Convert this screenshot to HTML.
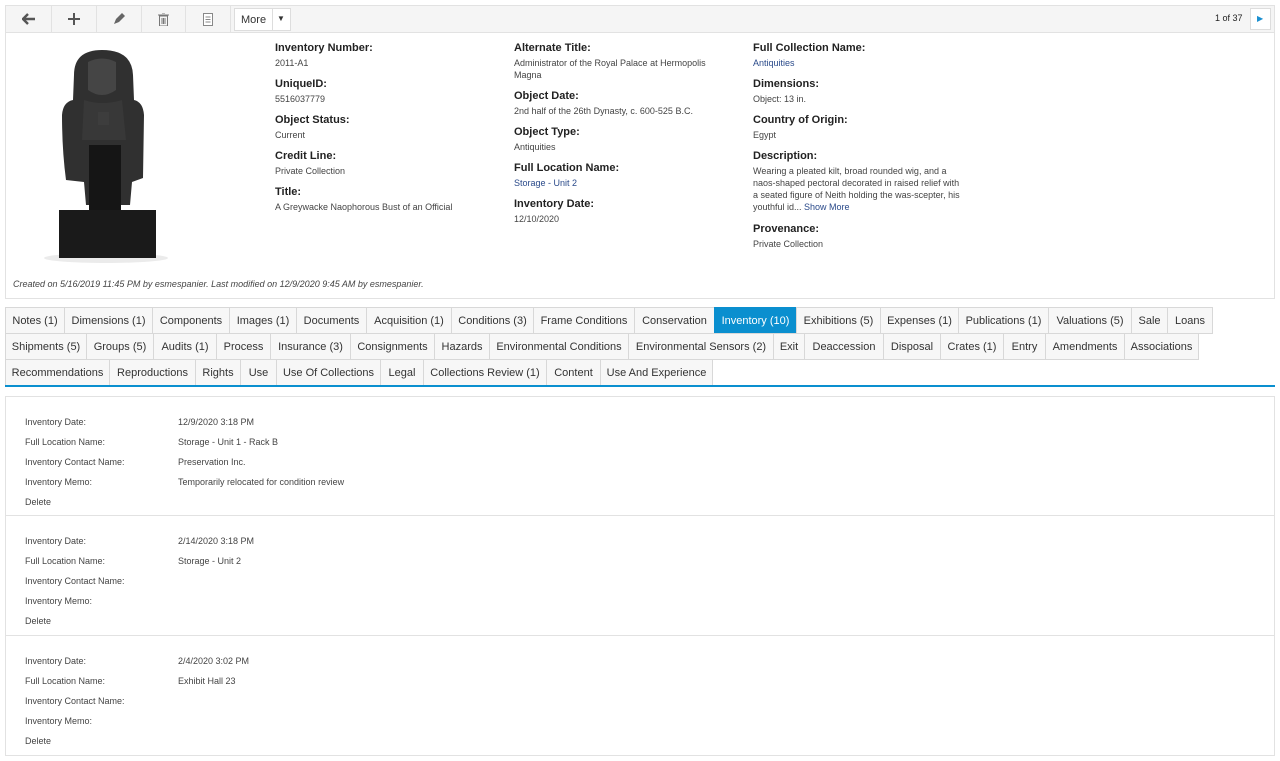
<!DOCTYPE html>
<html><head><meta charset="utf-8"><style>
*{box-sizing:border-box;margin:0;padding:0}
body{width:1280px;height:761px;background:#fff;font-family:"Liberation Sans",sans-serif;color:#333;position:relative;overflow:hidden}
.a{position:absolute;white-space:nowrap}
.tb{position:absolute;left:5px;top:5px;width:1270px;height:28px;background:#f5f5f5;border:1px solid #e2e2e2}
.btn{position:absolute;top:0;height:26px;border-right:1px solid #e2e2e2;display:flex;align-items:center;justify-content:center}
.panel{position:absolute;left:5px;top:32px;width:1270px;height:267px;border:1px solid #e2e2e2;border-top:none}
.l{font-size:11px;font-weight:bold;color:#222;line-height:14px}
.v{font-size:9px;color:#444;line-height:12px}
.lk{color:#2a4a8a}
.row{position:absolute;left:5px;display:flex;height:27px}
.t{height:27px;border:1px solid #d8d8d8;border-right:none;background:#f7f7f7;font-size:11px;color:#333;display:flex;align-items:center;justify-content:center;white-space:nowrap}
.row .t:last-child{border-right:1px solid #d8d8d8}
.t.on{background:#0a8fcf;color:#fff;border-color:#0a8fcf}
.inv{position:absolute;left:5px;width:1270px;border:1px solid #e2e2e2;border-top:none;height:120px}
.il{position:absolute;left:19px;font-size:9px;color:#444}
.iv{position:absolute;left:172px;font-size:9px;color:#444}
</style></head><body>
<div class="tb">
<div class="btn" style="left:0;width:46px"><svg width="14" height="12" viewBox="0 0 14 12"><path d="M6 1L1 6l5 5M1 6h12" stroke="#555" stroke-width="2.4" fill="none"/></svg></div>
<div class="btn" style="left:46px;width:45px"><svg width="12" height="12"><path d="M6 0v12M0 6h12" stroke="#555" stroke-width="2"/></svg></div>
<div class="btn" style="left:91px;width:45px"><svg width="12" height="12"><path d="M1 11l2-5 6-6 3 3-6 6z" fill="#666"/></svg></div>
<div class="btn" style="left:136px;width:44px"><svg width="11" height="13"><path d="M0 2h11M4 0h3M1.5 3h8v10h-8z" stroke="#777" fill="none" stroke-width="1"/><path d="M4 5v6M5.5 5v6M7 5v6" stroke="#777"/></svg></div>
<div class="btn" style="left:180px;width:45px"><svg width="10" height="13"><rect x=".5" y=".5" width="9" height="12" fill="#fff" stroke="#888"/><path d="M2.5 4h5M2.5 6.5h5M2.5 9h5" stroke="#888"/></svg></div>
<div style="position:absolute;left:228px;top:2px;width:57px;height:23px;border:1px solid #ddd;background:#fff;font-size:11px"><span class="a" style="left:6px;top:5px">More</span><span class="a" style="left:37px;top:0;height:21px;border-left:1px solid #ddd;width:1px"></span><span class="a" style="left:42px;top:5px;font-size:8px">▼</span></div>
<span class="a" style="left:1209px;top:7px;font-size:9px;color:#222">1 of 37</span>
<div style="position:absolute;left:1244px;top:2px;width:21px;height:22px;border:1px solid #ddd;background:#fff"><span class="a" style="left:6px;top:5px;font-size:8px;color:#1a8fd0">▶</span></div>
</div>
<div class="panel">
<svg class="a" style="left:28px;top:10px" width="140" height="230" viewBox="28 42 140 230">
<ellipse cx="100" cy="258" rx="62" ry="5" fill="#ddd" opacity=".6"/>
<path d="M68 75 Q68 50 96 50 Q126 50 127 75 L128 100 Q137 102 138 115 L137 178 L126 182 L124 205 L80 205 L78 182 L60 180 Q56 150 56 115 Q57 102 67 100 Z" fill="#303030"/>
<path d="M82 62 Q96 55 110 62 L110 90 Q96 100 82 90 Z" fill="#454545"/>
<path d="M78 100 Q96 106 116 100 L120 140 L76 140 Z" fill="#383838"/>
<rect x="92" y="112" width="11" height="13" fill="#3d3d3d"/>
<rect x="83" y="145" width="32" height="68" fill="#151515"/>
<rect x="53" y="210" width="97" height="48" fill="#1a1a1a"/>
</svg>
<div class="a l" style="left:269px;top:9px">Inventory Number:</div><div class="a v" style="left:269px;top:25px">2011-A1</div>
<div class="a l" style="left:269px;top:45px">UniqueID:</div><div class="a v" style="left:269px;top:61px">5516037779</div>
<div class="a l" style="left:269px;top:81px">Object Status:</div><div class="a v" style="left:269px;top:97px">Current</div>
<div class="a l" style="left:269px;top:117px">Credit Line:</div><div class="a v" style="left:269px;top:133px">Private Collection</div>
<div class="a l" style="left:269px;top:153px">Title:</div><div class="a v" style="left:269px;top:169px">A Greywacke Naophorous Bust of an Official</div>
<div class="a l" style="left:508px;top:9px">Alternate Title:</div><div class="a v" style="left:508px;top:25px;white-space:normal;width:215px">Administrator of the Royal Palace at Hermopolis Magna</div>
<div class="a l" style="left:508px;top:57px">Object Date:</div><div class="a v" style="left:508px;top:73px">2nd half of the 26th Dynasty, c. 600-525 B.C.</div>
<div class="a l" style="left:508px;top:93px">Object Type:</div><div class="a v" style="left:508px;top:109px">Antiquities</div>
<div class="a l" style="left:508px;top:129px">Full Location Name:</div><div class="a v lk" style="left:508px;top:145px">Storage - Unit 2</div>
<div class="a l" style="left:508px;top:165px">Inventory Date:</div><div class="a v" style="left:508px;top:181px">12/10/2020</div>
<div class="a l" style="left:747px;top:9px">Full Collection Name:</div><div class="a v lk" style="left:747px;top:25px">Antiquities</div>
<div class="a l" style="left:747px;top:45px">Dimensions:</div><div class="a v" style="left:747px;top:61px">Object: 13 in.</div>
<div class="a l" style="left:747px;top:81px">Country of Origin:</div><div class="a v" style="left:747px;top:97px">Egypt</div>
<div class="a l" style="left:747px;top:117px">Description:</div><div class="a v" style="left:747px;top:133px;width:220px">Wearing a pleated kilt, broad rounded wig, and a<br>naos-shaped pectoral decorated in raised relief with<br>a seated figure of Neith holding the was-scepter, his<br>youthful id... <span class="lk">Show More</span></div>
<div class="a l" style="left:747px;top:190px">Provenance:</div><div class="a v" style="left:747px;top:206px">Private Collection</div>
<div class="a" style="left:7px;top:247px;font-size:9px;font-style:italic;color:#444">Created on 5/16/2019 11:45 PM by esmespanier. Last modified on 12/9/2020 9:45 AM by esmespanier.</div>
</div>

<div class="row" style="top:307px">
<div class="t" style="width:59px">Notes (1)</div><div class="t" style="width:88px">Dimensions (1)</div><div class="t" style="width:77px">Components</div><div class="t" style="width:67px">Images (1)</div><div class="t" style="width:70px">Documents</div><div class="t" style="width:85px">Acquisition (1)</div><div class="t" style="width:82px">Conditions (3)</div><div class="t" style="width:101px">Frame Conditions</div><div class="t" style="width:80px">Conservation</div><div class="t on" style="width:82px">Inventory (10)</div><div class="t" style="width:84px">Exhibitions (5)</div><div class="t" style="width:78px">Expenses (1)</div><div class="t" style="width:90px">Publications (1)</div><div class="t" style="width:83px">Valuations (5)</div><div class="t" style="width:36px">Sale</div><div class="t" style="width:46px">Loans</div>
</div>
<div class="row" style="top:333px">
<div class="t" style="width:81px">Shipments (5)</div><div class="t" style="width:67px">Groups (5)</div><div class="t" style="width:63px">Audits (1)</div><div class="t" style="width:54px">Process</div><div class="t" style="width:80px">Insurance (3)</div><div class="t" style="width:84px">Consignments</div><div class="t" style="width:55px">Hazards</div><div class="t" style="width:139px">Environmental Conditions</div><div class="t" style="width:145px">Environmental Sensors (2)</div><div class="t" style="width:31px">Exit</div><div class="t" style="width:79px">Deaccession</div><div class="t" style="width:57px">Disposal</div><div class="t" style="width:63px">Crates (1)</div><div class="t" style="width:42px">Entry</div><div class="t" style="width:79px">Amendments</div><div class="t" style="width:75px">Associations</div>
</div>
<div class="row" style="top:359px">
<div class="t" style="width:104px">Recommendations</div><div class="t" style="width:86px">Reproductions</div><div class="t" style="width:45px">Rights</div><div class="t" style="width:36px">Use</div><div class="t" style="width:104px">Use Of Collections</div><div class="t" style="width:43px">Legal</div><div class="t" style="width:123px">Collections Review (1)</div><div class="t" style="width:54px">Content</div><div class="t" style="width:113px">Use And Experience</div>
</div>
<div class="a" style="left:5px;top:385px;width:1270px;height:2px;background:#0a8fcf"></div>

<div class="inv" style="top:396px;border-top:1px solid #e2e2e2">
<div class="il" style="top:20px">Inventory Date:</div><div class="iv" style="top:20px">12/9/2020 3:18 PM</div>
<div class="il" style="top:40px">Full Location Name:</div><div class="iv" style="top:40px">Storage - Unit 1 - Rack B</div>
<div class="il" style="top:60px">Inventory Contact Name:</div><div class="iv" style="top:60px">Preservation Inc.</div>
<div class="il" style="top:80px">Inventory Memo:</div><div class="iv" style="top:80px">Temporarily relocated for condition review</div>
<div class="il lk" style="top:100px">Delete</div>
</div>
<div class="inv" style="top:516px">
<div class="il" style="top:20px">Inventory Date:</div><div class="iv" style="top:20px">2/14/2020 3:18 PM</div>
<div class="il" style="top:40px">Full Location Name:</div><div class="iv" style="top:40px">Storage - Unit 2</div>
<div class="il" style="top:60px">Inventory Contact Name:</div>
<div class="il" style="top:80px">Inventory Memo:</div>
<div class="il lk" style="top:100px">Delete</div>
</div>
<div class="inv" style="top:636px">
<div class="il" style="top:20px">Inventory Date:</div><div class="iv" style="top:20px">2/4/2020 3:02 PM</div>
<div class="il" style="top:40px">Full Location Name:</div><div class="iv" style="top:40px">Exhibit Hall 23</div>
<div class="il" style="top:60px">Inventory Contact Name:</div>
<div class="il" style="top:80px">Inventory Memo:</div>
<div class="il lk" style="top:100px">Delete</div>
</div>
</body></html>
